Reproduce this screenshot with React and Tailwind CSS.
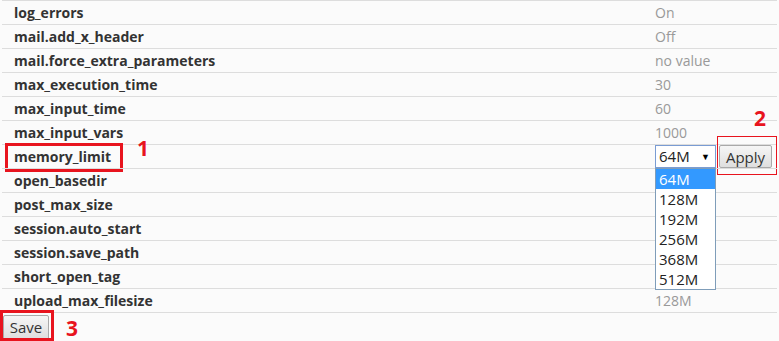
import React from 'react';

const rows = [
  { name: 'log_errors', value: 'On' },
  { name: 'mail.add_x_header', value: 'Off' },
  { name: 'mail.force_extra_parameters', value: 'no value' },
  { name: 'max_execution_time', value: '30' },
  { name: 'max_input_time', value: '60' },
  { name: 'max_input_vars', value: '1000' },
  { name: 'memory_limit', select: true },
  { name: 'open_basedir', value: '' },
  { name: 'post_max_size', value: '' },
  { name: 'session.auto_start', value: '' },
  { name: 'session.save_path', value: '' },
  { name: 'short_open_tag', value: '' },
  { name: 'upload_max_filesize', value: '128M' },
];

const options = ['64M', '128M', '192M', '256M', '368M', '512M'];

const MemorySelect = () => (
  <div className="relative flex items-center gap-[3px]">
    <div className="flex h-[23px] w-[61px] items-center justify-between border border-[#7a9cd3] bg-white pl-[3px] pr-[5px] text-[15px] text-[#222]">
      <span>64M</span>
      <span className="text-[9px] text-black">▼</span>
    </div>
    <button className="h-[23px] w-[53px] rounded-[2px] border border-[#a9a9a9] bg-gradient-to-b from-[#f6f6f6] to-[#dedede] text-[15px] text-[#333]">
      Apply
    </button>
    <div className="absolute left-0 top-[23px] z-10 w-[61px] border border-[#7f9db9] bg-white">
      {options.map((o, i) => (
        <div
          key={o}
          className={`h-[20px] pl-[3px] text-[15px] leading-[20px] ${i === 0 ? 'bg-[#3399ff] text-white' : 'text-[#222]'}`}
        >
          {o}
        </div>
      ))}
    </div>
    <div className="pointer-events-none absolute left-[62px] top-[-9px] h-[39px] w-[60px] border border-[#e8141e]" />
    <div className="absolute left-[99px] top-[-42px] text-[21px] font-bold text-[#e8141e]">2</div>
  </div>
);

export default function App() {
  return (
    <div className="h-[341px] w-[779px] overflow-hidden bg-[#fbfbfb] font-['Open_Sans',sans-serif]">
      <div className="px-[2px]">
        {rows.map((r) => (
          <div key={r.name} className="relative flex h-[24px] items-center border-t border-[#dddddd]">
            <div className="w-[653px] pl-[12px] text-[14px] font-bold text-[#333]">{r.name}</div>
            {r.select ? (
              <MemorySelect />
            ) : (
              <div className="text-[14px] text-[#999]">{r.value}</div>
            )}
            {r.select && (
              <>
                <div className="pointer-events-none absolute left-[3px] top-[-2px] h-[29px] w-[118px] border-[3px] border-[#e8141e]" />
                <div className="absolute left-[135px] top-[-12px] text-[21px] font-bold text-[#e8141e]">1</div>
              </>
            )}
          </div>
        ))}
        <div className="relative flex items-center border-t border-[#dddddd] pt-[2px]">
          <button className="ml-[1px] h-[25px] w-[46px] rounded-[2px] border border-[#a9a9a9] bg-gradient-to-b from-[#f6f6f6] to-[#dedede] text-[15px] text-[#333]">
            Save
          </button>
          <div className="pointer-events-none absolute left-[-2px] top-[-3px] h-[31px] w-[54px] border-[3px] border-[#e8141e]" />
          <div className="ml-[17px] text-[21px] font-bold leading-[24px] text-[#e8141e]">3</div>
        </div>
      </div>
    </div>
  );
}
